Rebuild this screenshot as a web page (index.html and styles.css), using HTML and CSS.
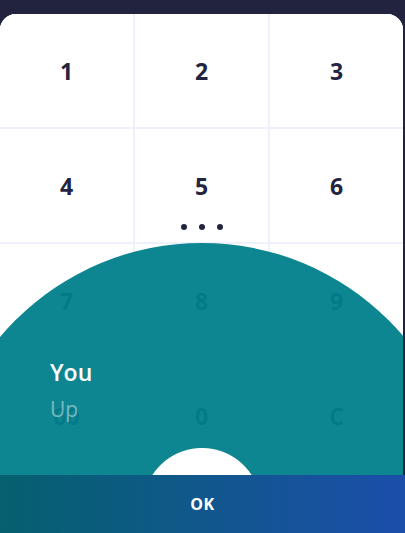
FILE: index.html
```html
<!DOCTYPE html>
<html lang="en">
<head>
  <meta charset="UTF-8" />
  <meta name="viewport" content="width=device-width, initial-scale=1" />
  <title>Keypad</title>
  <link rel="stylesheet" href="styles.css">
</head>
<body>
  <div class="topbar"></div>

  <div class="card">
    <div class="keypad">
      <button class="key">1</button>
      <button class="key">2</button>
      <button class="key">3</button>
      <button class="key">4</button>
      <button class="key">5</button>
      <button class="key">6</button>
      <button class="key">7</button>
      <button class="key">8</button>
      <button class="key">9</button>
      <button class="key">00</button>
      <button class="key">0</button>
      <button class="key">C</button>
    </div>

    <div class="dots">
      <span></span><span></span><span></span>
    </div>

    <div class="dial"></div>

    <div class="dialLabel">
      <div class="who">You</div>
      <div class="dir">Up</div>
    </div>
  </div>

  <button class="okBtn">OK</button>
</body>
</html>
```

FILE: styles.css
```css
* {
  box-sizing: border-box;
  margin: 0;
  padding: 0;
}
body {
  font-family: "Open Sans", "Noto Sans", sans-serif;
  display: flex;
  flex-direction: column;
  height: 100vh;
  background: #22233f;
  overflow: hidden;
}
.topbar {
  height: 14px;
  flex: none;
}
.card {
  flex: 1;
  margin-right: 2px;
  background: #fff;
  border-radius: 16px 16px 0 0;
  position: relative;
  overflow: hidden;
}
.keypad {
  display: grid;
  grid-template-columns: repeat(3, 1fr);
  grid-auto-rows: 113px;
  gap: 2px;
  background: #eef1fc;
}
.key {
  background: #fff;
  border: none;
  font-family: inherit;
  font-size: 23px;
  font-weight: 700;
  color: #23243f;
  display: flex;
  align-items: center;
  justify-content: center;
}
.dots {
  position: absolute;
  top: 210px;
  left: 0;
  right: 0;
  display: flex;
  justify-content: center;
  gap: 12px;
}
.dots span {
  width: 6px;
  height: 6px;
  border-radius: 50%;
  background: #23243f;
}
.dial {
  position: absolute;
  left: -62px;
  top: 229px;
  width: 528px;
  height: 528px;
  border-radius: 50%;
  background: radial-gradient(circle, #fff 0 58.5px, rgba(0, 127, 139, 0.945) 59.5px);
}
.dialLabel {
  position: absolute;
  left: 50px;
  top: 343px;
  color: #fff;
}
.who {
  font-size: 23px;
  font-weight: 600;
  line-height: 30px;
}
.dir {
  margin-top: 8px;
  font-size: 21px;
  line-height: 28px;
  color: rgba(255, 255, 255, 0.45);
}
.okBtn {
  flex: none;
  height: 58px;
  border: none;
  background: linear-gradient(90deg, #05606e, #1c4eaa);
  color: #fff;
  font-family: inherit;
  font-size: 16px;
  font-weight: 700;
  letter-spacing: 0.5px;
}
```
